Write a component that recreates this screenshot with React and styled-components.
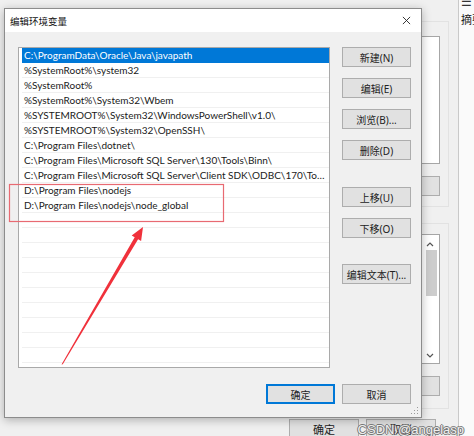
import styled, { createGlobalStyle } from "styled-components";

const GlobalStyle = createGlobalStyle`
  html, body {
    margin: 0;
    padding: 0;
  }
  body {
    width: 474px;
    height: 436px;
    overflow: hidden;
    background: #f0f0f0;
    font-family: "Noto Sans", "Noto Sans CJK SC", sans-serif;
  }
`;

const paths = [
  "C:\\ProgramData\\Oracle\\Java\\javapath",
  "%SystemRoot%\\system32",
  "%SystemRoot%",
  "%SystemRoot%\\System32\\Wbem",
  "%SYSTEMROOT%\\System32\\WindowsPowerShell\\v1.0\\",
  "%SYSTEMROOT%\\System32\\OpenSSH\\",
  "C:\\Program Files\\dotnet\\",
  "C:\\Program Files\\Microsoft SQL Server\\130\\Tools\\Binn\\",
  "C:\\Program Files\\Microsoft SQL Server\\Client SDK\\ODBC\\170\\Tools\\Binn\\",
  "D:\\Program Files\\nodejs",
  "D:\\Program Files\\nodejs\\node_global",
];

const sideButtons = [
  { label: "新建(N)", gap: 0 },
  { label: "编辑(E)", gap: 11 },
  { label: "浏览(B)...", gap: 11 },
  { label: "删除(D)", gap: 11 },
  { label: "上移(U)", gap: 27 },
  { label: "下移(O)", gap: 11 },
  { label: "编辑文本(T)...", gap: 26 },
];

const App = () => {
  const rows = [...paths];
  while (rows.length < 22) rows.push("");

  return (
    <Desktop>
      <GlobalStyle />

      <BackWindow>
        <BackSide>
          <Group>
            <WhiteBox />
            <BackButton />
          </Group>
          <Group $gap={16} $bottom={12}>
            <ScrollBox>
              <Chevron viewBox="0 0 8 5">
                <path d="M1 4 L4 1 L7 4" />
              </Chevron>
              <Thumb />
              <Chevron viewBox="0 0 8 5" $bottom>
                <path d="M1 1 L4 4 L7 1" />
              </Chevron>
            </ScrollBox>
            <BackButton />
          </Group>
        </BackSide>
        <BackFooter>
          <BackButton $wide>确定</BackButton>
          <BackButton $wide>取消</BackButton>
        </BackFooter>
      </BackWindow>

      <SideWindow>
        <MenuGlyph>☰</MenuGlyph>
        <SideText>摘要</SideText>
      </SideWindow>

      <Dialog>
        <TitleBar>
          <Title>编辑环境变量</Title>
          <CloseIcon viewBox="0 0 10 10">
            <path d="M1 1 L9 9 M9 1 L1 9" />
          </CloseIcon>
        </TitleBar>
        <Body>
          <Main>
            <ListBox>
              {rows.map((p, i) => (
                <Row key={i} $selected={i === 0}>
                  {p}
                </Row>
              ))}
            </ListBox>
            <ButtonColumn>
              {sideButtons.map((b) => (
                <Button key={b.label} $gap={b.gap}>
                  {b.label}
                </Button>
              ))}
            </ButtonColumn>
          </Main>
          <Footer>
            <Button $primary>确定</Button>
            <Button>取消</Button>
          </Footer>
        </Body>
        <Grip viewBox="0 0 8 8">
          <rect x="6" y="0" width="1" height="1" />
          <rect x="6" y="3" width="1" height="1" />
          <rect x="3" y="3" width="1" height="1" />
          <rect x="6" y="6" width="1" height="1" />
          <rect x="3" y="6" width="1" height="1" />
          <rect x="0" y="6" width="1" height="1" />
        </Grip>
      </Dialog>

      <Annotation viewBox="0 0 474 436">
        <rect x="9.5" y="184.5" width="214" height="37" fill="none" stroke="#e86a72" strokeWidth="1.2" />
        <polygon
          points="61.5,364.5 62.8,364.2 138.1,239.2 141.1,241 143,227 131.7,235.4 134.7,237.2"
          fill="#f0313b"
        />
      </Annotation>

      <Watermark>CSDN @angelasp</Watermark>
    </Desktop>
  );
};

const Desktop = styled.div`
  position: relative;
  width: 474px;
  height: 436px;
  overflow: hidden;
  background: #f0f0f0;
`;

const BackWindow = styled.div`
  position: absolute;
  left: 0;
  top: 0;
  width: 458px;
  height: 470px;
  background: #f0f0f0;
  border-right: 1px solid #c9c9c9;
  display: flex;
  flex-direction: column;
  align-items: flex-end;
`;

const BackSide = styled.div`
  display: flex;
  flex-direction: column;
  padding: 21px 9px 0 0;
`;

const Group = styled.div`
  width: 60px;
  margin-top: ${(p) => p.$gap || 0}px;
  padding: 14px 8px ${(p) => p.$bottom || 10}px 0;
  border: 1px solid #e2e2e2;
  border-left: none;
  display: flex;
  flex-direction: column;
  align-items: flex-end;
`;

const WhiteBox = styled.div`
  width: 60px;
  height: 126px;
  background: #fff;
  border: 1px solid #a6a6a6;
`;

const ScrollBox = styled.div`
  position: relative;
  width: 60px;
  height: 128px;
  margin-top: -4px;
  background: #fff;
  border: 1px solid #a6a6a6;
  display: flex;
  flex-direction: column;
  align-items: flex-end;
  padding-right: 2px;
  box-sizing: content-box;
`;

const Chevron = styled.svg`
  width: 8px;
  height: 5px;
  margin: ${(p) => (p.$bottom ? "auto 3px 5px 0" : "7px 3px 3px 0")};
  fill: none;
  stroke: #555;
  stroke-width: 1.2;
`;

const Thumb = styled.div`
  width: 11px;
  height: 46px;
  background: #cdcdcd;
`;

const BackButton = styled.div`
  width: ${(p) => (p.$wide ? "68px" : "60px")};
  height: 18px;
  margin-top: 12px;
  background: #e1e1e1;
  border: 1px solid #adadad;
  font-size: 11px;
  color: #222;
  display: flex;
  align-items: center;
  justify-content: center;
`;

const BackFooter = styled.div`
  display: flex;
  gap: 7px;
  margin: -2px 22px 0 0;
`;

const SideWindow = styled.div`
  position: absolute;
  left: 459px;
  top: 0;
  width: 60px;
  height: 436px;
  background: #fafafa;
  display: flex;
  flex-direction: column;
  padding-left: 2px;
`;

const MenuGlyph = styled.div`
  font-size: 12px;
  line-height: 8px;
  margin-top: -2px;
  color: #333;
`;

const SideText = styled.div`
  font-size: 11px;
  margin-top: 5px;
  color: #222;
`;

const Dialog = styled.div`
  position: absolute;
  left: 4px;
  top: 8px;
  width: 418px;
  height: 410px;
  box-sizing: border-box;
  background: #f0f0f0;
  border: 1px solid #8c8c8c;
  box-shadow: 0 2px 9px rgba(0, 0, 0, 0.28);
  display: flex;
  flex-direction: column;
`;

const TitleBar = styled.div`
  height: 23px;
  background: #fff;
  display: flex;
  align-items: center;
  justify-content: space-between;
  padding: 0 10px 0 5px;
`;

const Title = styled.span`
  font-size: 9.5px;
  color: #111;
`;

const CloseIcon = styled.svg`
  width: 9px;
  height: 9px;
  fill: none;
  stroke: #222;
  stroke-width: 1;
`;

const Body = styled.div`
  flex: 1;
  display: flex;
  flex-direction: column;
  padding: 15px 10px 13px 13px;
`;

const Main = styled.div`
  display: flex;
  gap: 12px;
`;

const ListBox = styled.div`
  width: 312px;
  height: 321px;
  box-sizing: border-box;
  background: #fff;
  border: 1px solid #a9a9a9;
  overflow: hidden;
`;

const Row = styled.div`
  height: 15px;
  box-sizing: border-box;
  margin-left: 3px;
  padding: 0 3px 0 2px;
  font-family: Lato, "Noto Sans", sans-serif;
  font-size: 10px;
  line-height: 14px;
  white-space: nowrap;
  overflow: hidden;
  text-overflow: ellipsis;
  color: ${(p) => (p.$selected ? "#fff" : "#1a1a1a")};
  background: ${(p) => (p.$selected ? "#0078d7" : "#fff")};
  border-bottom: 1px solid ${(p) => (p.$selected ? "#0078d7" : "#f0f0f0")};
`;

const ButtonColumn = styled.div`
  display: flex;
  flex-direction: column;
`;

const Button = styled.div`
  width: 69px;
  height: 20px;
  box-sizing: border-box;
  margin-top: ${(p) => p.$gap || 0}px;
  background: #e1e1e1;
  border: ${(p) => (p.$primary ? "2px solid #0078d7" : "1px solid #adadad")};
  font-size: 10px;
  color: #222;
  display: flex;
  align-items: center;
  justify-content: center;
`;

const Footer = styled.div`
  display: flex;
  justify-content: flex-end;
  gap: 7px;
  margin-top: 16px;
`;

const Grip = styled.svg`
  position: absolute;
  right: 2px;
  bottom: 2px;
  width: 8px;
  height: 8px;
  fill: #9a9a9a;
`;

const Annotation = styled.svg`
  position: absolute;
  left: 0;
  top: 0;
  width: 474px;
  height: 436px;
  pointer-events: none;
`;

const Watermark = styled.div`
  position: absolute;
  right: 10px;
  bottom: -1px;
  font-family: "Liberation Sans", sans-serif;
  font-size: 13px;
  color: rgba(255, 255, 255, 0.9);
  text-shadow: 1px 0 0 #777, -1px 0 0 #777, 0 1px 0 #777, 0 -1px 0 #777;
`;

export default App;
